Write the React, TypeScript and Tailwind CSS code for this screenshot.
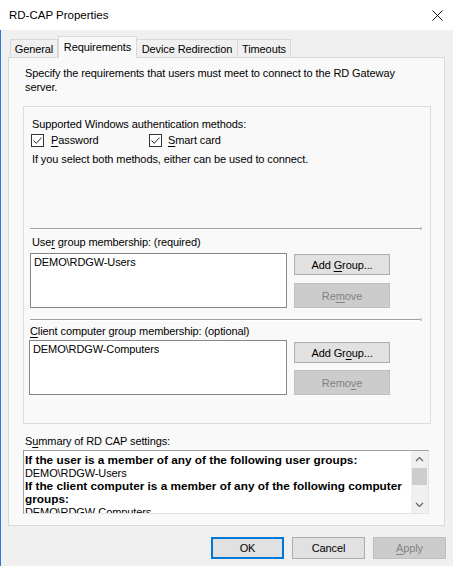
import React from 'react';

const ui = { fontFamily: '"Liberation Sans", Arial, sans-serif' };

function U({ children }: { children: React.ReactNode }) {
  return <span className="underline underline-offset-2">{children}</span>;
}

function Check() {
  return (
    <span className="w-[13px] h-[13px] border border-[#333333] bg-white flex items-center justify-center shrink-0">
      <svg width="11" height="11" viewBox="0 0 11 11">
        <path d="M1.5 5.5 L4.2 8.3 L9.6 2.6" fill="none" stroke="#222" strokeWidth="1" />
      </svg>
    </span>
  );
}

function Btn({ children, disabled, focus, className = '' }: { children: React.ReactNode; disabled?: boolean; focus?: boolean; className?: string }) {
  const base = disabled
    ? 'bg-[#cccccc] border-[#bfbfbf] text-[#838383]'
    : focus
    ? 'bg-[#e1e1e1] border-[#0078d7] shadow-[inset_0_0_0_1px_#0078d7] text-black'
    : 'bg-[#e1e1e1] border-[#adadad] text-black';
  return (
    <div className={`border flex items-center justify-center ${base} ${className}`}>
      <span className="whitespace-nowrap">{children}</span>
    </div>
  );
}

function Separator() {
  return (
    <div className="ml-[6px] w-[392px] flex items-center">
      <div className="flex-1 border-t border-[#a0a0a0] border-b-white border-b" />
      <span className="w-[2px] h-[3px] bg-[#c8c8c8]" />
    </div>
  );
}

export default function App() {
  return (
    <div className="w-[453px] h-[566px] bg-[#f0f0f0] text-black text-[11px] leading-[14px] tracking-[-0.1px] flex flex-col overflow-hidden" style={ui}>
      {/* title bar */}
      <div className="h-[30px] bg-white flex items-center justify-between pl-[9px] pr-[10px] shrink-0">
        <span className="text-[11.5px] tracking-normal text-black">RD-CAP Properties</span>
        <svg width="11" height="11" viewBox="0 0 11 11">
          <path d="M0.5 0.5 L10.5 10.5 M10.5 0.5 L0.5 10.5" stroke="#111" strokeWidth="1" />
        </svg>
      </div>

      <div className="flex-1 border-l border-[#2b79d4] flex flex-col">
        {/* tabs */}
        <div className="h-[21px] mt-[6px] ml-[9px] flex items-end relative z-10 whitespace-nowrap">
          <div className="h-[18px] w-[48px] border border-b-0 border-[#d9d9d9] bg-[#f0f0f0] flex items-center justify-center">General</div>
          <div className="h-[22px] w-[79px] -mb-[1px] border border-b-0 border-[#d9d9d9] bg-[#f9f9f9] flex items-center justify-center pb-[2px]">Requirements</div>
          <div className="h-[18px] w-[101px] border border-b-0 border-l-0 border-[#d9d9d9] bg-[#f0f0f0] flex items-center justify-center">Device Redirection</div>
          <div className="h-[18px] w-[53px] border border-b-0 border-l-0 border-[#d9d9d9] bg-[#f0f0f0] flex items-center justify-center">Timeouts</div>
        </div>

        {/* tab page */}
        <div className="ml-[7px] w-[437px] h-[469px] border border-[#d9d9d9] bg-[#f9f9f9] flex flex-col shrink-0">
          <p className="pt-[8px] pl-[16px] w-[400px]">
            Specify the requirements that users must meet to connect to the RD Gateway server.
          </p>

          {/* group box */}
          <div className="mt-[12px] ml-[14px] w-[408px] h-[318px] border border-[#dcdcdc] flex flex-col">
            <div className="pt-[10px] pl-[8px]">Supported Windows authentication methods:</div>
            <div className="mt-[2px] h-[14px] pl-[7px] flex items-center">
              <Check />
              <span className="ml-[7px] w-[54px]"><U>P</U>assword</span>
              <span className="ml-[44px]"><Check /></span>
              <span className="ml-[6px]"><U>S</U>mart card</span>
            </div>
            <div className="mt-[5px] pl-[8px]">If you select both methods, either can be used to connect.</div>

            <div className="mt-[61px]"><Separator /></div>

            <div className="mt-[5px] pl-[8px]">Use<U>r</U> group membership: (required)</div>
            <div className="mt-[4px] pl-[6px] flex gap-[7px]">
              <div className="w-[257px] h-[55px] border border-[#828790] bg-white pl-[3px] pt-[1px]">{'DEMO\\RDGW-Users'}</div>
              <div className="flex flex-col pt-[1px]">
                <Btn className="w-[96px] h-[21px]">Add <U>G</U>roup...</Btn>
                <Btn disabled className="w-[96px] h-[25px] mt-[8px]">Re<U>m</U>ove</Btn>
              </div>
            </div>

            <div className="mt-[10px]"><Separator /></div>

            <div className="mt-[3px] pl-[6px]"><U>C</U>lient computer group membership: (optional)</div>
            <div className="mt-[2px] pl-[5px] flex gap-[7px]">
              <div className="w-[258px] h-[55px] border border-[#828790] bg-white pl-[3px] pt-[1px]">{'DEMO\\RDGW-Computers'}</div>
              <div className="flex flex-col pt-[2px]">
                <Btn className="w-[96px] h-[21px]">Add Gr<U>o</U>up...</Btn>
                <Btn disabled className="w-[96px] h-[25px] mt-[7px]">Remo<U>v</U>e</Btn>
              </div>
            </div>
          </div>

          <div className="mt-[10px] pl-[16px]">S<U>u</U>mmary of RD CAP settings:</div>
          <div className="mt-[2px] ml-[14px] w-[406px] h-[64px] border border-[#a0a0a0] border-r-[#e3e3e3] border-b-[#e3e3e3] bg-white flex overflow-hidden">
            <div className="flex-1 pl-[1px] pt-[3px] leading-[13px] overflow-hidden tracking-normal">
              <div className="font-bold text-[11.8px]">If the user is a member of any of the following user groups:</div>
              <div className="text-[11px] tracking-[-0.1px]">{'DEMO\\RDGW-Users'}</div>
              <div className="font-bold text-[11.8px]">If the client computer is a member of any of the following computer groups:</div>
              <div className="text-[11px] tracking-[-0.1px]">{'DEMO\\RDGW-Computers'}</div>
            </div>
            <div className="w-[17px] bg-[#f0f0f0] flex flex-col items-center">
              <svg width="17" height="17" viewBox="0 0 17 17">
                <path d="M5 10 L8.5 6.5 L12 10" fill="none" stroke="#606060" strokeWidth="1.2" />
              </svg>
              <div className="w-[15px] h-[17px] bg-[#cdcdcd]" />
              <div className="flex-1" />
              <svg width="17" height="17" viewBox="0 0 17 17">
                <path d="M5 7 L8.5 10.5 L12 7" fill="none" stroke="#606060" strokeWidth="1.2" />
              </svg>
            </div>
          </div>
        </div>

        {/* dialog buttons */}
        <div className="mt-[11px] ml-[210px] flex gap-[8px]">
          <Btn focus className="w-[73px] h-[22px]">OK</Btn>
          <Btn className="w-[73px] h-[22px]">Cancel</Btn>
          <Btn disabled className="w-[73px] h-[22px]"><U>A</U>pply</Btn>
        </div>
      </div>
    </div>
  );
}
